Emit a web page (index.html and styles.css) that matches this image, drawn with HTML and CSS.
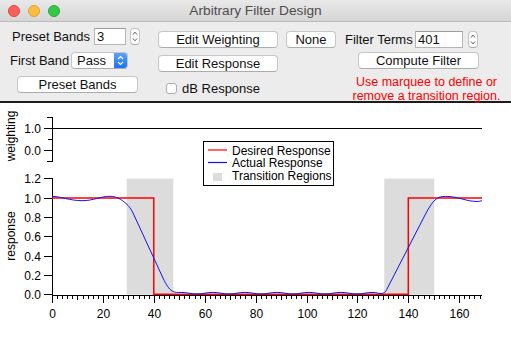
FILE: index.html
```html
<!DOCTYPE html>
<html lang="en">
<head>
    <meta charset="UTF-8">
    <title>Arbitrary Filter Design</title>
    <link rel="stylesheet" href="styles.css">
</head>
<body>
    <div class="window">
        <div class="titlebar">
            <div class="lights">
                <span class="light red"></span>
                <span class="light yellow"></span>
                <span class="light green"></span>
            </div>
            <div class="title">Arbitrary Filter Design</div>
        </div>

        <div class="panel">
            <!-- preset bands -->
            <div class="col col-bands">
                <div class="row">
                    <span class="lbl lbl-preset">Preset Bands</span>
                    <div class="field field-bands">3</div>
                    <div class="stepper">
                        <svg width="10" height="17" viewBox="0 0 10 17"><path d="M3 6.5L5 4.2L7 6.5M3 10.5L5 12.8L7 10.5" fill="none" stroke="#555" stroke-width="1"/></svg>
                    </div>
                </div>
                <div class="row">
                    <span class="lbl lbl-first">First Band</span>
                    <div class="popup">
                        <span class="popup-text">Pass</span>
                        <span class="popup-arrows">
                            <svg width="13" height="15" viewBox="0 0 13 15"><path d="M4 6L6.5 3.6L9 6M4 9L6.5 11.4L9 9" fill="none" stroke="#fff" stroke-width="1.3"/></svg>
                        </span>
                    </div>
                </div>
                <div class="row">
                    <button class="btn btn-preset">Preset Bands</button>
                </div>
            </div>

            <!-- edit -->
            <div class="col col-edit">
                <div class="row">
                    <button class="btn btn-wide">Edit Weighting</button>
                    <button class="btn btn-none">None</button>
                </div>
                <div class="row">
                    <button class="btn btn-wide">Edit Response</button>
                </div>
                <div class="row row-check">
                    <span class="checkbox"></span>
                    <span>dB Response</span>
                </div>
            </div>

            <!-- filter terms -->
            <div class="col col-terms">
                <div class="row">
                    <span class="lbl lbl-terms">Filter Terms</span>
                    <div class="field field-terms">401</div>
                    <div class="stepper stepper-terms">
                        <svg width="10" height="17" viewBox="0 0 10 17"><path d="M3 6.5L5 4.2L7 6.5M3 10.5L5 12.8L7 10.5" fill="none" stroke="#555" stroke-width="1"/></svg>
                    </div>
                </div>
                <div class="row">
                    <button class="btn btn-compute">Compute Filter</button>
                </div>
                <p class="hint">Use marquee to define or<br>remove a transition region.</p>
            </div>
        </div>

        <svg class="plot" width="511" height="234" viewBox="0 103 511 234">
            <!-- transition regions -->
            <rect class="region" x="126.7" y="178.6" width="46.6" height="116.1"/>
            <rect class="region" x="384.3" y="178.6" width="50" height="116.1"/>

            <!-- weighting axis -->
            <g class="axis">
                <path d="M52.5 117V161M47 117H52.5M44 128H52.5M48 139H52.5M44 150H52.5M47 161H52.5"/>
                <path d="M52 128H482"/>
            </g>
            <text class="tick-lbl" x="41" y="132.5" text-anchor="end">1.0</text>
            <text class="tick-lbl" x="41" y="154.5" text-anchor="end">0.0</text>
            <text class="axis-name" transform="translate(15 136) rotate(-90)" text-anchor="middle">weighting</text>

            <!-- response axis -->
            <g class="axis">
                <path d="M52.5 178.6V295M44 178.6H52.5M44 198H52.5M44 217.3H52.5M44 236.6H52.5M44 256H52.5M44 275.4H52.5M44 294.7H52.5"/>
                <path d="M52 295H482"/>
                <path d="M57.5 295v4M62.5 295v4M67.5 295v4M72.5 295v4M83.5 295v4M88.5 295v4M93.5 295v4M98.5 295v4M108.5 295v4M113.5 295v4M118.5 295v4M123.5 295v4M133.5 295v4M139.5 295v4M144.5 295v4M149.5 295v4M159.5 295v4M164.5 295v4M169.5 295v4M174.5 295v4M184.5 295v4M189.5 295v4M195.5 295v4M200.5 295v4M210.5 295v4M215.5 295v4M220.5 295v4M225.5 295v4M235.5 295v4M240.5 295v4M245.5 295v4M251.5 295v4M261.5 295v4M266.5 295v4M271.5 295v4M276.5 295v4M286.5 295v4M291.5 295v4M296.5 295v4M301.5 295v4M312.5 295v4M317.5 295v4M322.5 295v4M327.5 295v4M337.5 295v4M342.5 295v4M347.5 295v4M352.5 295v4M362.5 295v4M368.5 295v4M373.5 295v4M378.5 295v4M388.5 295v4M393.5 295v4M398.5 295v4M403.5 295v4M413.5 295v4M418.5 295v4M424.5 295v4M429.5 295v4M439.5 295v4M444.5 295v4M449.5 295v4M454.5 295v4M464.5 295v4M469.5 295v4M474.5 295v4M480.5 295v4"/>
                <path d="M77.5 295v5M128.5 295v5M179.5 295v5M230.5 295v5M281.5 295v5M332.5 295v5M383.5 295v5M434.5 295v5"/>
                <path d="M52.5 295v8M103.5 295v8M154.5 295v8M205.5 295v8M256.5 295v8M307.5 295v8M357.5 295v8M408.5 295v8M459.5 295v8"/>
            </g>
            <text class="tick-lbl" x="41" y="183.1" text-anchor="end">1.2</text>
            <text class="tick-lbl" x="41" y="202.5" text-anchor="end">1.0</text>
            <text class="tick-lbl" x="41" y="221.8" text-anchor="end">0.8</text>
            <text class="tick-lbl" x="41" y="241.1" text-anchor="end">0.6</text>
            <text class="tick-lbl" x="41" y="260.5" text-anchor="end">0.4</text>
            <text class="tick-lbl" x="41" y="279.9" text-anchor="end">0.2</text>
            <text class="tick-lbl" x="41" y="299.2" text-anchor="end">0.0</text>
            <text class="axis-name" transform="translate(15 236) rotate(-90)" text-anchor="middle">response</text>

            <g class="tick-lbl" text-anchor="middle">
                <text x="52.5" y="318">0</text>
                <text x="103.5" y="318">20</text>
                <text x="154.5" y="318">40</text>
                <text x="205.5" y="318">60</text>
                <text x="256.5" y="318">80</text>
                <text x="307.5" y="318">100</text>
                <text x="357.5" y="318">120</text>
                <text x="408.5" y="318">140</text>
                <text x="459.5" y="318">160</text>
            </g>

            <!-- desired response -->
            <path class="desired" d="M52 198H153.8V294.3H408.3V198H482"/>

            <!-- actual response -->
            <path class="actual" d="M52 196.3C60 196.3 70 200.7 82 200.7C94 200.7 100 196.3 110 196.3C116 196.3 121 199 126 203.5C129 206 131 209 133 213L163 278C166 284.5 169 289 172 291C175 293 178 292.4 181 292.4C187 292.4 191 294 197 294S207 292.4 213 292.4S223 294 229 294S239 292.4 245 292.4S255 294 261 294S271 292.4 277 292.4S287 294 293 294S303 292.4 309 292.4S319 294 325 294S335 292.4 341 292.4S351 294 357 294S367 292.4 373 292.4C377 292.4 379 294 382 293.5C385 293 386 291 388 287L424 217C428 209.5 433 199 440 197C444 196 447 196.6 450 196.6C458 196.8 467 201.5 476 201.5C479 201.5 481 201 482 200.7"/>

            <!-- legend -->
            <rect class="legend" x="203.5" y="141.5" width="130" height="44"/>
            <path d="M208 150H227" stroke="#f00" stroke-width="1.2"/>
            <path d="M208 162.5H227" stroke="#1010f0" stroke-width="1.2"/>
            <rect x="213" y="173" width="9" height="8" fill="#dcdcdc"/>
            <g class="legend-lbl">
                <text x="232" y="154.5">Desired Response</text>
                <text x="232" y="167">Actual Response</text>
                <text x="232" y="179.5">Transition Regions</text>
            </g>
        </svg>
    </div>
</body>
</html>
```

FILE: styles.css
```css
body {
    margin: 0;
    font-family: "Liberation Sans", Arial, sans-serif;
    background-color: #fff;
}
.window {
    width: 511px;
    height: 337px;
    overflow: hidden;
}
.titlebar {
    height: 22px;
    box-sizing: border-box;
    display: grid;
    grid-template-columns: 1fr auto 1fr;
    align-items: center;
    background: linear-gradient(#e9e9e9, #d5d5d5);
    border-bottom: 1px solid #bcbcbc;
}
.lights {
    display: flex;
    gap: 8px;
    padding-left: 8px;
}
.light {
    width: 12px;
    height: 12px;
    border-radius: 50%;
    box-sizing: border-box;
}
.light.red {
    background: #fc605c;
    border: 1px solid #e0443e;
}
.light.yellow {
    background: #fdbc40;
    border: 1px solid #dea236;
}
.light.green {
    background: #34c84a;
    border: 1px solid #27aa35;
}
.title {
    font-size: 13.7px;
    color: #4d4d4d;
}

.panel {
    height: 79px;
    display: flex;
    background-color: #ececec;
    border-bottom: 2px solid #1c1c1c;
    font-size: 13px;
    color: #111;
}
.col {
    display: flex;
    flex-direction: column;
}
.col-bands {
    width: 158px;
    padding: 6px 0 0 10px;
    box-sizing: border-box;
    gap: 7px;
}
.col-edit {
    width: 187px;
    padding-top: 9px;
    gap: 7px;
}
.col-terms {
    padding-top: 9px;
    gap: 4px;
}
.row {
    display: flex;
    align-items: center;
    height: 17px;
    white-space: nowrap;
}
.lbl {
    display: inline-block;
}
.lbl-preset {
    margin-left: 2px;
    width: 82px;
}
.lbl-first {
    width: 61px;
}
.lbl-terms {
    width: 70px;
}

.field {
    height: 17px;
    box-sizing: border-box;
    background: #fff;
    border: 1px solid #b5b5b5;
    border-top-color: #9c9c9c;
    padding-left: 2px;
    line-height: 15px;
}
.field-bands {
    width: 32px;
}
.field-terms {
    width: 48px;
}
.stepper {
    margin-left: 4px;
    width: 10px;
    height: 17px;
    box-sizing: border-box;
    border: 1px solid #c4c4c4;
    border-bottom-color: #ababab;
    border-radius: 4px;
    background: #fff;
    overflow: hidden;
}
.stepper svg {
    display: block;
    margin: -1px 0 0 -1px;
}
.stepper-terms {
    margin-left: 5px;
}

.popup {
    display: flex;
    width: 57px;
    height: 17px;
    box-sizing: border-box;
    background: #fff;
    border: 1px solid #c4c4c4;
    border-bottom-color: #ababab;
    border-radius: 4px;
    overflow: hidden;
}
.popup-text {
    padding-left: 5px;
    line-height: 15px;
}
.popup-arrows {
    margin-left: auto;
    width: 13px;
    height: 15px;
    background: linear-gradient(#5aa2fb, #1b72f2);
}
.popup-arrows svg {
    display: block;
}

.btn {
    height: 17px;
    box-sizing: border-box;
    padding: 0;
    background: #fff;
    border: 1px solid #c6c6c6;
    border-bottom-color: #acacac;
    border-radius: 4px;
    font-family: inherit;
    font-size: 13px;
    line-height: 15px;
    color: #111;
}
.btn-preset {
    margin-left: 7px;
    width: 121px;
}
.btn-wide {
    width: 120px;
}
.btn-none {
    margin-left: 8px;
    width: 50px;
}
.btn-compute {
    margin-left: 13px;
    width: 121px;
}
.row-check {
    height: 19px;
    padding-left: 8px;
}
.checkbox {
    width: 11px;
    height: 11px;
    box-sizing: border-box;
    border: 1px solid #acacac;
    border-radius: 3px;
    background: #fff;
    margin-right: 5px;
}
.hint {
    margin: 2px 0 0;
    width: 163px;
    text-align: center;
    font-size: 12.5px;
    line-height: 14px;
    color: #f00;
    white-space: nowrap;
}

.plot {
    display: block;
    font-family: "Liberation Sans", Arial, sans-serif;
}
.region {
    fill: #dcdcdc;
}
.axis path {
    fill: none;
    stroke: #000;
    stroke-width: 1;
    shape-rendering: crispEdges;
}
.tick-lbl {
    font-size: 12px;
    fill: #000;
}
.axis-name {
    font-size: 12px;
    fill: #000;
}
.desired {
    fill: none;
    stroke: #f00;
    stroke-width: 1.5;
}
.actual {
    fill: none;
    stroke: #1212f0;
    stroke-width: 1;
}
.legend {
    fill: #fff;
    stroke: #000;
    stroke-width: 1;
}
.legend-lbl {
    font-size: 12px;
    fill: #000;
}
```
